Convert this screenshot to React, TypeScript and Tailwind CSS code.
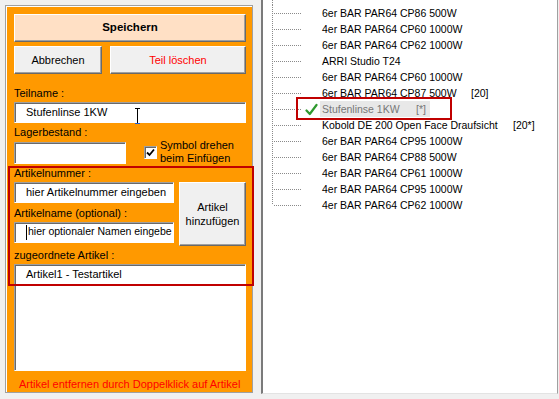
import React from "react";

const raised =
  "border border-t-white border-l-white border-r-[#696969] border-b-[#696969] shadow-[inset_-1px_-1px_0_#a0a0a0]";
const sunken =
  "border border-t-[#a0a0a0] border-l-[#a0a0a0] border-r-white border-b-white shadow-[inset_1px_1px_0_#696969] bg-white";

type Row = {
  name: string;
  suffix?: string;
  nameW?: string;
  selected?: boolean;
};

const rows: Row[] = [
  { name: "6er BAR PAR64 CP86 500W" },
  { name: "4er BAR PAR64 CP60 1000W" },
  { name: "6er BAR PAR64 CP62 1000W" },
  { name: "ARRI Studio T24" },
  { name: "6er BAR PAR64 CP60 1000W" },
  { name: "6er BAR PAR64 CP87 500W", suffix: "[20]", nameW: "w-[149px]" },
  { name: "Stufenlinse 1KW", suffix: "[*]", nameW: "w-[94px]", selected: true },
  { name: "Kobold DE 200 Open Face Draufsicht", suffix: "[20*]", nameW: "w-[191px]" },
  { name: "6er BAR PAR64 CP95 1000W" },
  { name: "6er BAR PAR64 CP88 500W" },
  { name: "4er BAR PAR64 CP61 1000W" },
  { name: "4er BAR PAR64 CP95 1000W" },
  { name: "4er BAR PAR64 CP62 1000W" },
];

function Connector({ last }: { last?: boolean }) {
  return (
    <svg width="30" height="16" className="shrink-0">
      <line
        x1="1.5"
        y1="0"
        x2="1.5"
        y2={last ? 8 : 16}
        stroke="#8a8a8a"
        strokeWidth="1"
        strokeDasharray="1 1"
      />
      <line x1="3" y1="8.5" x2="30" y2="8.5" stroke="#8a8a8a" strokeWidth="1" strokeDasharray="1 1" />
    </svg>
  );
}

function TreeRow({ row, last }: { row: Row; last?: boolean }) {
  return (
    <div className="relative flex h-[16px] items-center">
      <Connector last={last} />
      <div className="flex w-[19px] shrink-0 justify-end pr-[2px]">
        {row.selected && (
          <svg width="13" height="13" viewBox="0 0 13 13">
            <path d="M1.5 7.5 L4.8 11 L11.5 2" fill="none" stroke="#2f9a2f" strokeWidth="2.2" strokeLinecap="round" strokeLinejoin="round" />
          </svg>
        )}
      </div>
      <div
        className={`flex h-[16px] items-center px-[2px] leading-[16px] ${
          row.selected ? "bg-[#e8e8e8] pr-[4px] text-[#777]" : "text-black"
        }`}
      >
        <span className={`whitespace-nowrap ${row.nameW ?? ""}`}>{row.name}</span>
        {row.suffix && <span className="whitespace-nowrap">{row.suffix}</span>}
      </div>
      {row.selected && (
        <div className="absolute left-[25px] top-[-4px] h-[23px] w-[156px] border-2 border-[#c00000]" />
      )}
    </div>
  );
}

export default function App() {
  return (
    <div
      className="relative flex h-[399px] w-[559px] overflow-hidden bg-[#f0f0f0] text-[11px] text-black"
      style={{ fontFamily: '"Liberation Sans", Arial, sans-serif' }}
    >
      {/* left orange panel */}
      <div className="ml-[5px] mt-[5px] h-[388px] w-[248px] shrink-0 border border-[#a0a0a0]">
        <div className="flex h-full flex-col border-l border-t border-white bg-[#ff9900] pl-[7px] pt-[7px]">
          <button className={`h-[28px] w-[232px] bg-[#ffe0c5] text-[11.5px] font-bold ${raised}`}>
            Speichern
          </button>
          <div className="mt-[4px] flex gap-[8px]">
            <button className={`h-[28px] w-[88px] bg-[#f0f0f0] ${raised}`}>Abbrechen</button>
            <button className={`h-[28px] w-[136px] bg-[#f0f0f0] text-[#ff0000] ${raised}`}>Teil löschen</button>
          </div>

          <div className="mt-[11px] h-[16px] leading-[16px]">Teilname :</div>
          <div className={`relative mt-[1px] flex h-[21px] w-[232px] items-center pl-[11px] ${sunken}`}>
            Stufenlinse 1KW
            <svg className="absolute left-[119px] top-[5px]" width="7" height="17" viewBox="0 0 7 17">
              <path d="M1 0.5 H6 M3.5 0.5 V15.5" stroke="#000" strokeWidth="1" />
              <path d="M1 15.5 H6" stroke="#1f5fd0" strokeWidth="1" />
            </svg>
          </div>

          <div className="mt-[1px] h-[16px] leading-[16px]">Lagerbestand :</div>
          <div className="mt-[2px] flex h-[22px] items-start">
            <div className={`h-[22px] w-[112px] ${sunken}`} />
            <div className="ml-[18px] mt-[4px] flex h-[13px] w-[13px] items-center justify-center border border-t-[#a0a0a0] border-l-[#a0a0a0] border-r-white border-b-white bg-white shadow-[inset_1px_1px_0_#696969]">
              <svg width="9" height="9" viewBox="0 0 9 9">
                <path d="M1 4.5 L3.5 7 L8 1.5" fill="none" stroke="#000" strokeWidth="1.8" />
              </svg>
            </div>
            <div className="ml-[3px] mt-[-3px] leading-[13px]">
              Symbol drehen
              <br />
              beim Einfügen
            </div>
          </div>

          <div className="mt-[1px] h-[16px] leading-[16px]">Artikelnummer :</div>
          <div className="flex">
            <div className="flex w-[160px] flex-col">
              <div className={`mt-[1px] flex h-[21px] items-center pl-[11px] ${sunken}`}>hier Artikelnummer eingeben</div>
              <div className="mt-[2px] h-[16px] leading-[16px]">Artikelname (optional) :</div>
              <div className={`mt-[1px] flex h-[21px] items-center overflow-hidden whitespace-nowrap pl-[11px] text-[10.5px] ${sunken}`}>
                <span className="mr-[1px] h-[15px] w-px shrink-0 bg-black" />
                hier optionaler Namen eingebe
              </div>
            </div>
            <button className={`ml-[5px] mt-[1px] h-[64px] w-[67px] bg-[#f0f0f0] leading-[14px] ${raised}`}>
              Artikel
              <br />
              hinzufügen
            </button>
          </div>

          <div className="mt-[1px] h-[16px] leading-[16px]">zugeordnete Artikel :</div>
          <div className={`mt-[1px] h-[108px] w-[232px] pl-[11px] pt-[1px] leading-[16px] ${sunken}`}>
            Artikel1 - Testartikel
          </div>
          <div className="mt-[5px] h-[16px] pl-[5px] leading-[16px] text-[#ff0000]">
            Artikel entfernen durch Doppelklick auf Artikel
          </div>
        </div>
      </div>

      {/* highlight box over the article section */}
      <div className="absolute left-[8px] top-[166px] h-[120px] w-[246px] border-2 border-[#c00000]" />

      {/* right tree panel */}
      <div className="ml-[8px] h-[394px] w-[297px] shrink-0 border-b border-l-2 border-r border-b-[#e3e3e3] border-l-[#7a7a7a] border-r-[#a0a0a0] bg-white pl-[8px] text-[10.5px]">
        <svg width="30" height="5" className="block">
          <line x1="1.5" y1="0" x2="1.5" y2="5" stroke="#8a8a8a" strokeWidth="1" strokeDasharray="1 1" />
        </svg>
        {rows.map((r, i) => (
          <TreeRow key={i} row={r} last={i === rows.length - 1} />
        ))}
      </div>
    </div>
  );
}
